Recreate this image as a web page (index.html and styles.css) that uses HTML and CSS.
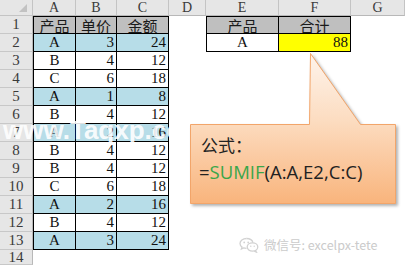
FILE: index.html
```html
<!DOCTYPE html>
<html>
<head>
<meta charset="utf-8">
<link rel="stylesheet" href="styles.css">
</head>
<body>
<div class="page">
  <div class="sheet">
    <!-- header row -->
    <div class="corner"><span class="tri"></span></div>
    <div class="ch">A</div><div class="ch">B</div><div class="ch">C</div><div class="ch">D</div><div class="ch">E</div><div class="ch">F</div><div class="ch">G</div>
    <!-- row 1 -->
    <div class="rh">1</div>
    <div class="t tl tt h m cjk">产品</div><div class="t tt h m cjk">单价</div><div class="t tt h m cjk">金额</div>
    <div class="c"></div>
    <div class="t tl tt h m cjk">产品</div><div class="t tt h m cjk">合计</div>
    <div class="c"></div>
    <!-- row 2 -->
    <div class="rh">2</div>
    <div class="t tl b m">A</div><div class="t b n">3</div><div class="t b n">24</div>
    <div class="c"></div>
    <div class="t tl m">A</div><div class="t y n">88</div>
    <div class="c"></div>
    <!-- row 3 -->
    <div class="rh">3</div>
    <div class="t tl m">B</div><div class="t n">4</div><div class="t n">12</div>
    <div class="c"></div><div class="c"></div><div class="c"></div><div class="c"></div>
    <!-- row 4 -->
    <div class="rh">4</div>
    <div class="t tl m">C</div><div class="t n">6</div><div class="t n">18</div>
    <div class="c"></div><div class="c"></div><div class="c"></div><div class="c"></div>
    <!-- row 5 -->
    <div class="rh">5</div>
    <div class="t tl b m">A</div><div class="t b n">1</div><div class="t b n">8</div>
    <div class="c"></div><div class="c"></div><div class="c"></div><div class="c"></div>
    <!-- row 6 -->
    <div class="rh">6</div>
    <div class="t tl m">B</div><div class="t n">4</div><div class="t n">12</div>
    <div class="c"></div><div class="c"></div><div class="c"></div><div class="c"></div>
    <!-- row 7 -->
    <div class="rh">7</div>
    <div class="t tl b m">A</div><div class="t b n">2</div><div class="t b n">16</div>
    <div class="c"></div><div class="c"></div><div class="c"></div><div class="c"></div>
    <!-- row 8 -->
    <div class="rh">8</div>
    <div class="t tl m">B</div><div class="t n">4</div><div class="t n">12</div>
    <div class="c"></div><div class="c"></div><div class="c"></div><div class="c"></div>
    <!-- row 9 -->
    <div class="rh">9</div>
    <div class="t tl m">B</div><div class="t n">4</div><div class="t n">12</div>
    <div class="c"></div><div class="c"></div><div class="c"></div><div class="c"></div>
    <!-- row 10 -->
    <div class="rh">10</div>
    <div class="t tl m">C</div><div class="t n">6</div><div class="t n">18</div>
    <div class="c"></div><div class="c"></div><div class="c"></div><div class="c"></div>
    <!-- row 11 -->
    <div class="rh">11</div>
    <div class="t tl b m">A</div><div class="t b n">2</div><div class="t b n">16</div>
    <div class="c"></div><div class="c"></div><div class="c"></div><div class="c"></div>
    <!-- row 12 -->
    <div class="rh">12</div>
    <div class="t tl m">B</div><div class="t n">4</div><div class="t n">12</div>
    <div class="c"></div><div class="c"></div><div class="c"></div><div class="c"></div>
    <!-- row 13 -->
    <div class="rh">13</div>
    <div class="t tl b m">A</div><div class="t b n">3</div><div class="t b n">24</div>
    <div class="c"></div><div class="c"></div><div class="c"></div><div class="c"></div>
    <!-- row 14 -->
    <div class="rh">14</div>
    <div class="c"></div><div class="c"></div><div class="c"></div><div class="c"></div><div class="c"></div><div class="c"></div><div class="c"></div>
  </div>

  <div class="wm-site">www.Taqxp.com</div>

  <div class="callout">
    <svg class="callout-shape" width="206" height="151" viewBox="0 0 206 151">
      <defs>
        <linearGradient id="peach" x1="0" y1="0" x2="0" y2="1">
          <stop offset="0" stop-color="#fef4ec"/>
          <stop offset="0.45" stop-color="#fcdcc0"/>
          <stop offset="1" stop-color="#f9b47c"/>
        </linearGradient>
      </defs>
      <path d="M0.5,71.5 H119.5 L120.5,0.5 L170.5,71.5 H205.5 V150.5 H0.5 Z" fill="url(#peach)" stroke="#f2a56a" stroke-width="1"/>
    </svg>
    <div class="callout-text">
      <div class="cl-title">公式：</div>
      <div class="cl-formula">=<span class="fn">SUMIF</span>(A:A,E2,C:C)</div>
    </div>
  </div>

  <div class="wm-wechat">
    <svg class="wx-icon" width="20" height="16" viewBox="0 0 20 16">
      <path d="M7.5,1.5 C3.8,1.5 1,3.8 1,6.5 C1,8 1.8,9.2 3,10.1 L2.4,12 L4.6,10.9 C5.5,11.2 6.4,11.3 7.5,11.3" fill="none" stroke="#d2d2d2" stroke-width="1.3"/>
      <path d="M7.5,1.5 C10.8,1.5 13.4,3.3 13.9,5.6" fill="none" stroke="#d2d2d2" stroke-width="1.3"/>
      <ellipse cx="13.5" cy="10" rx="5.3" ry="4.1" fill="none" stroke="#d2d2d2" stroke-width="1.3"/>
      <path d="M16.5,13.5 L17.6,15.3 L15.2,14.2" fill="none" stroke="#d2d2d2" stroke-width="1.1"/>
      <circle cx="5.2" cy="5.4" r="0.9" fill="#d2d2d2"/>
      <circle cx="9.2" cy="5.4" r="0.9" fill="#d2d2d2"/>
      <circle cx="11.8" cy="9.3" r="0.7" fill="#d2d2d2"/>
      <circle cx="15.2" cy="9.3" r="0.7" fill="#d2d2d2"/>
    </svg>
    <span class="wx-text">微信号: excelpx-tete</span>
  </div>
</div>
</body>
</html>
```

FILE: styles.css
```css
* { box-sizing: border-box; }
html, body {
  margin: 0;
  padding: 0;
  background: #ffffff;
  overflow: hidden;
}
.page {
  position: relative;
  width: 405px;
  height: 265px;
  overflow: hidden;
}
.sheet {
  display: grid;
  grid-template-columns: 33px 43px 41px 52px 37px 73px 72px 54px;
  grid-template-rows: 16px repeat(13, 18px) 15px;
  font-family: "Liberation Serif", "Noto Sans CJK SC", serif;
  font-size: 15px;
  color: #111;
}
.sheet > div {
  display: flex;
  align-items: center;
  line-height: 1;
  overflow: hidden;
}
.corner {
  background: #e6e6e6;
  border-right: 1px solid #c4c4c4;
  border-bottom: 1px solid #c4c4c4;
  justify-content: flex-end;
  align-items: flex-end !important;
  padding: 0 5px 3px 0;
}
.tri {
  width: 0;
  height: 0;
  border-left: 8px solid transparent;
  border-bottom: 8px solid #c2c2c2;
}
.ch {
  background: #e6e6e6;
  border-right: 1px solid #c4c4c4;
  border-bottom: 1px solid #b8b8b8;
  justify-content: center;
  font-size: 14px;
  color: #3a3a3a;
}
.rh {
  background: #e6e6e6;
  border-right: 1px solid #b8b8b8;
  border-bottom: 1px solid #c8c8c8;
  justify-content: center;
  font-size: 15px;
  color: #3a3a3a;
}
.c { background: #ffffff; }
.t {
  border-right: 1px solid #000;
  border-bottom: 1px solid #000;
  background: #ffffff;
}
.tl { border-left: 1px solid #000; }
.tt { border-top: 1px solid #000; }
.h { background: #bfbfbf; }
.b { background: #b7dde8; }
.y { background: #ffff00; }
.m { justify-content: center; }
.n { justify-content: flex-end; padding-right: 2px; }
.cjk {
  font-family: "Noto Sans CJK SC", sans-serif;
  font-size: 15px;
  color: #1a1a1a;
}

.wm-site {
  position: absolute;
  left: 3px;
  top: 115px;
  width: 200px;
  white-space: nowrap;
  font-family: "Liberation Sans", sans-serif;
  font-weight: bold;
  font-size: 26px;
  line-height: 30px;
  color: rgba(255, 255, 255, 0.9);
  z-index: 1;
}

.callout {
  position: absolute;
  left: 190px;
  top: 53px;
  width: 206px;
  height: 151px;
  z-index: 2;
}
.callout-shape {
  position: absolute;
  left: 0;
  top: 0;
  overflow: visible;
  filter: drop-shadow(2px 2px 1.5px rgba(0, 0, 0, 0.3));
}
.callout-text {
  position: relative;
  display: flex;
  flex-direction: column;
  padding: 83px 0 0 9px;
  color: #222;
}
.cl-title {
  font-family: "Noto Sans CJK SC", sans-serif;
  font-size: 17px;
  line-height: 17px;
  padding-left: 2px;
}
.cl-formula {
  margin-top: 9px;
  font-family: "Open Sans", sans-serif;
  font-size: 18.5px;
  line-height: 20px;
  white-space: nowrap;
}
.fn { color: #3aa64a; }

.wm-wechat {
  position: absolute;
  left: 239px;
  top: 237px;
  display: flex;
  align-items: center;
  gap: 5px;
  z-index: 1;
}
.wx-text {
  font-family: "Noto Sans CJK SC", sans-serif;
  font-size: 12.5px;
  line-height: 16px;
  color: #cbcbcb;
}
```
